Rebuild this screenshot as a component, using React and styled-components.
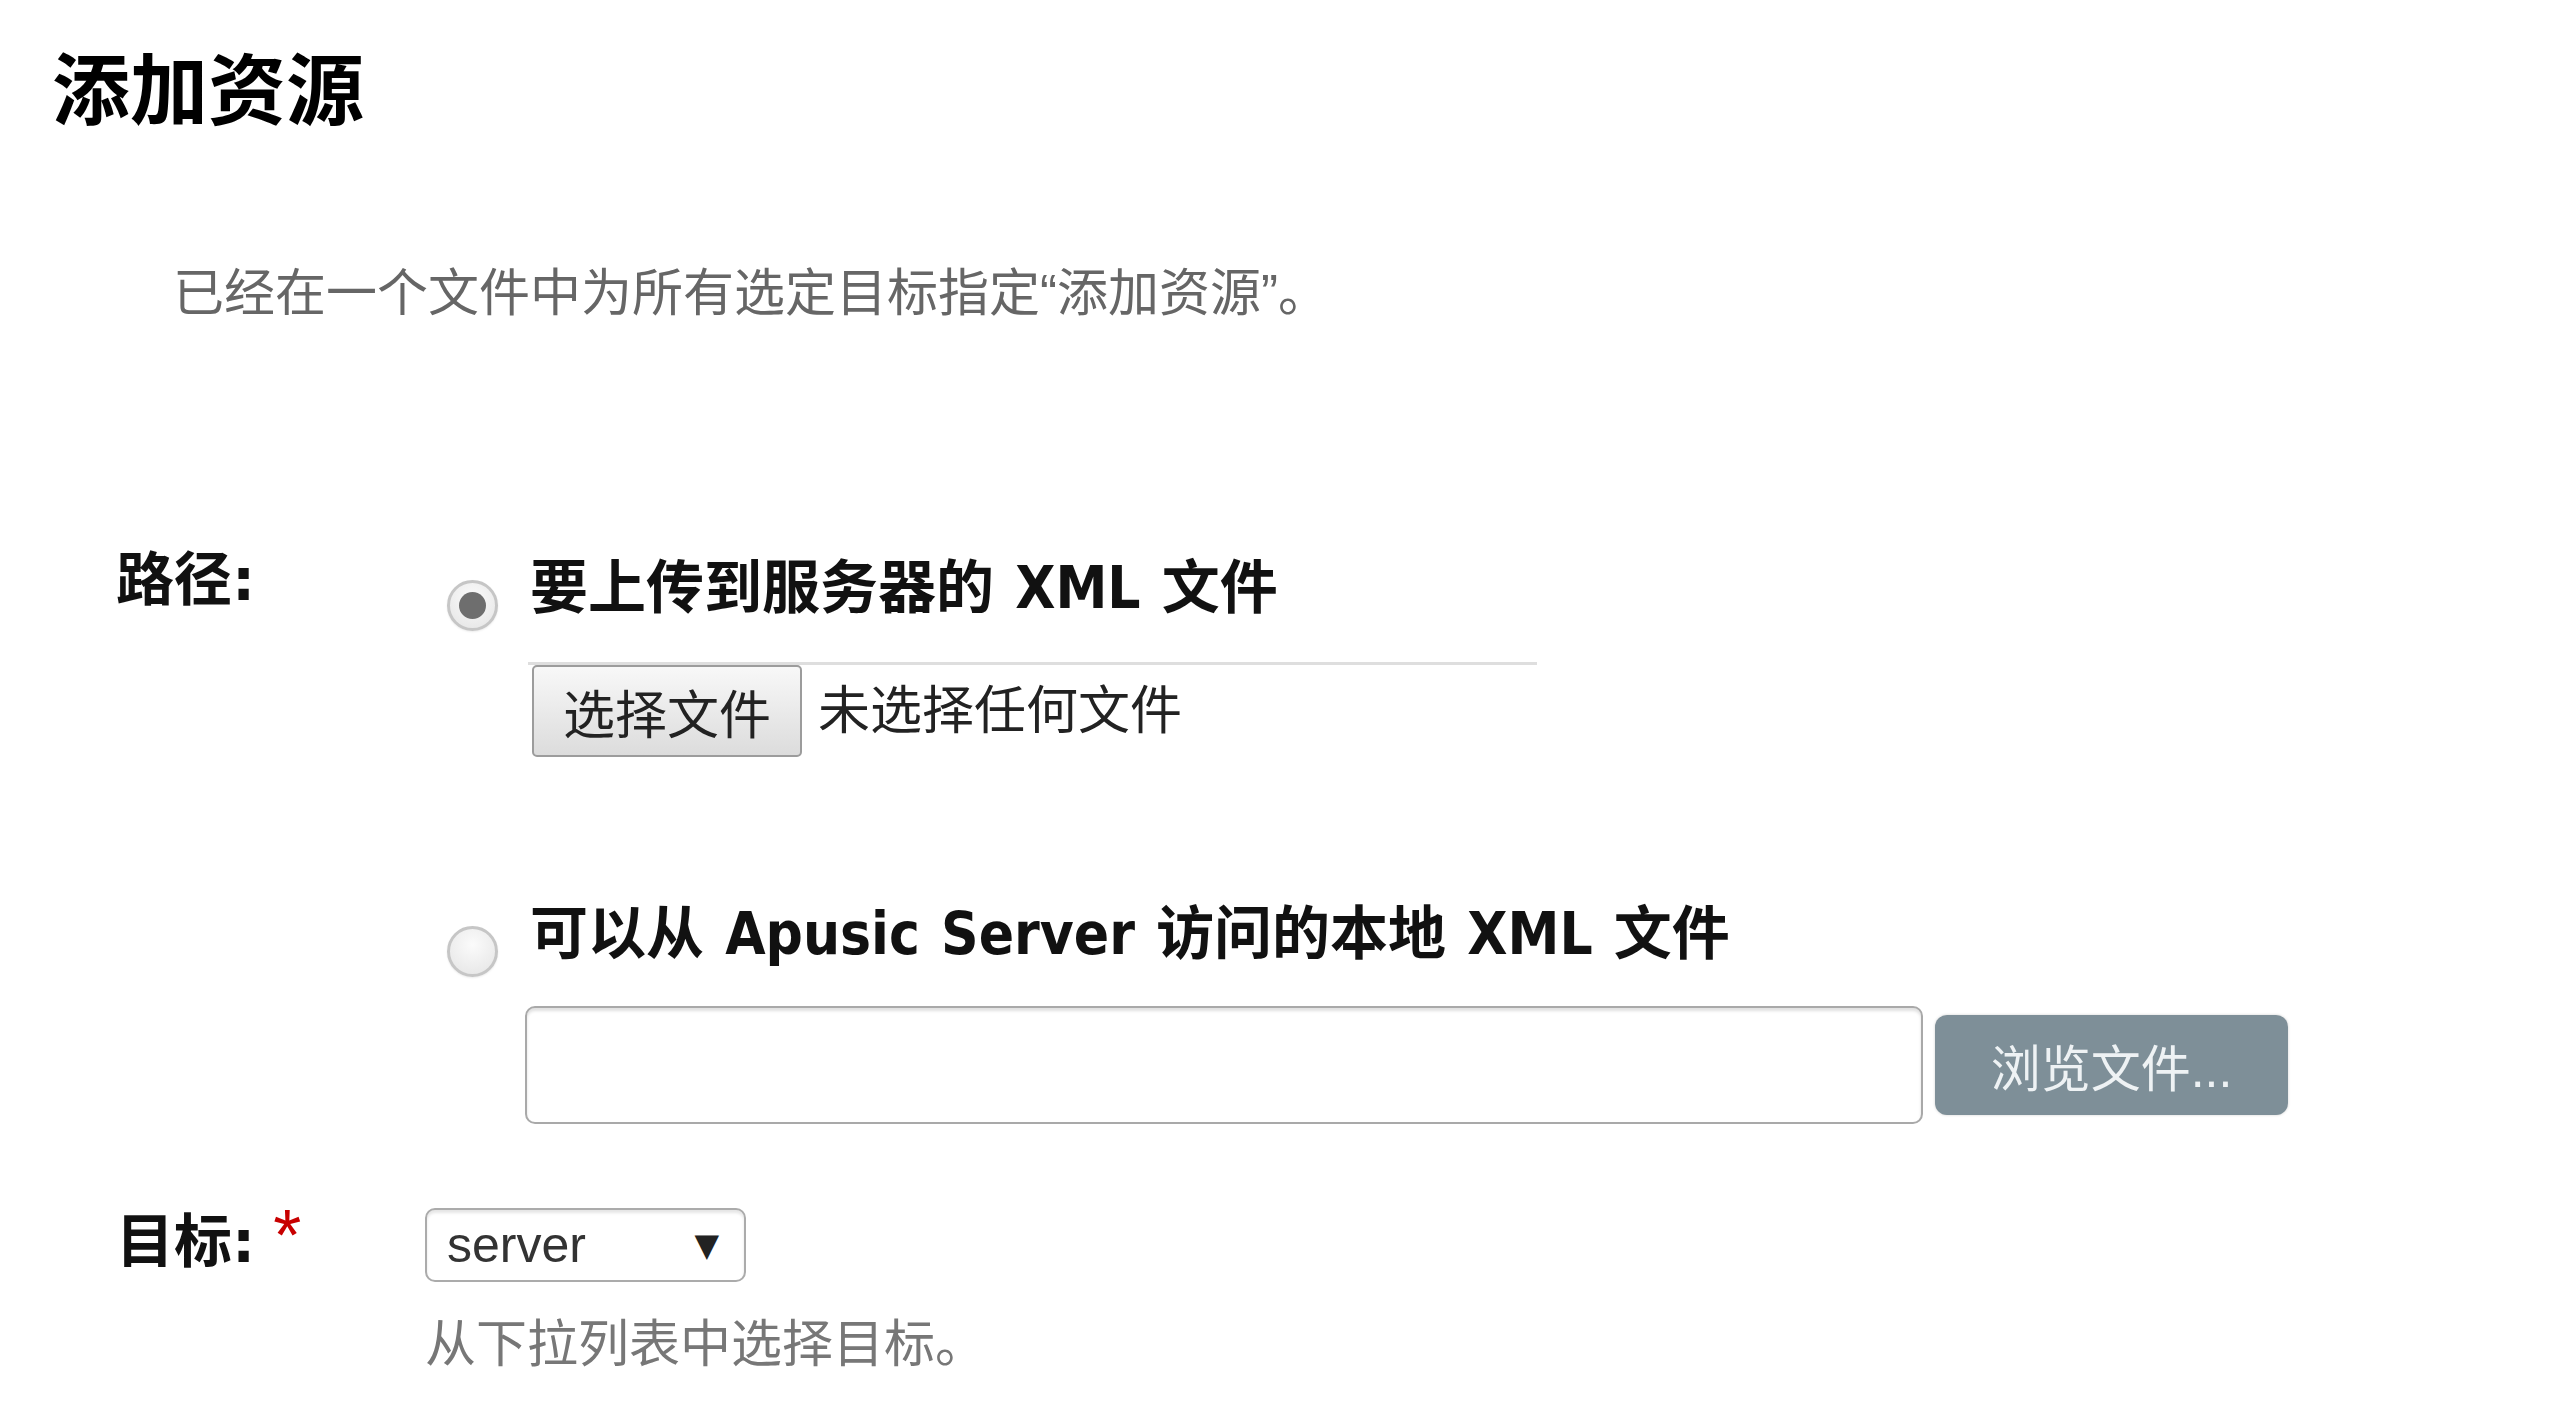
import React from "react";
import styled, { createGlobalStyle } from "styled-components";

const GlobalStyle = createGlobalStyle`
  html, body { margin: 0; padding: 0; background: #ffffff; }
  body {
    font-family: "Liberation Sans", "Noto Sans CJK SC", sans-serif;
    color: #111;
  }
`;

const Page = styled.main`
  padding: 53px 0 60px 52px;
`;

const Title = styled.h1`
  margin: 0;
  font-family: "DejaVu Sans", "Noto Sans CJK SC", sans-serif;
  font-size: 78px;
  font-weight: 700;
  line-height: 78px;
  color: #000;
`;

const Intro = styled.p`
  margin: 138px 0 0;
  padding-left: 121px;
  font-size: 51px;
  line-height: 50px;
  color: #666;
`;

const Form = styled.form`
  margin: 232px 0 0 64px;
  display: flex;
  flex-direction: column;
`;

const FieldRow = styled.div`
  display: grid;
  grid-template-columns: 309px 1fr;
  align-items: start;
  margin-top: ${(p) => p.$gap || 0}px;
`;

const FieldLabel = styled.div`
  display: flex;
  align-items: flex-start;
  padding-top: ${(p) => p.$offset || 0}px;
  font-family: "DejaVu Sans", "Noto Sans CJK SC", sans-serif;
  font-weight: 700;
  font-size: 58px;
  line-height: 58px;
  color: #111;
`;

const Required = styled.span`
  margin: -14px 0 0 18px;
  color: #c80000;
  font-family: "Liberation Sans", sans-serif;
  font-weight: 400;
  font-size: 72px;
  line-height: 72px;
`;

const Options = styled.div`
  display: flex;
  flex-direction: column;
  padding: 8px 0 0 22px;
`;

const Option = styled.div`
  display: flex;
  align-items: flex-start;
  gap: 27px;
  margin-top: ${(p) => p.$gap || 0}px;
`;

const Radio = styled.span`
  flex: none;
  box-sizing: border-box;
  width: 51px;
  height: 51px;
  margin-top: 21px;
  border-radius: 50%;
  border: 3px solid #c6c6c6;
  background: radial-gradient(circle at 50% 35%, #fbfbfb 0%, #e4e4e4 100%);
  box-shadow: 0 1px 2px rgba(0, 0, 0, 0.08);
  display: flex;
  align-items: center;
  justify-content: center;

  &::after {
    content: "";
    display: ${(p) => (p.$checked ? "block" : "none")};
    width: 27px;
    height: 27px;
    border-radius: 50%;
    background: #6e6e6e;
  }
`;

const OptionBody = styled.div`
  display: flex;
  flex-direction: column;
`;

const OptionText = styled.div`
  padding-left: 5px;
  font-family: "DejaVu Sans Condensed", "DejaVu Sans", "Noto Sans CJK SC", sans-serif;
  font-weight: 700;
  font-size: 58px;
  line-height: 58px;
  word-spacing: 3px;
  color: #111;
  white-space: nowrap;
`;

const FileField = styled.div`
  display: flex;
  align-items: center;
  width: 1009px;
  margin: 45px 0 0 3px;
  border-top: 3px solid #dedede;
`;

const FileButton = styled.button`
  box-sizing: border-box;
  width: 270px;
  height: 92px;
  margin-left: 4px;
  padding: 0;
  border: 2px solid #9c9c9c;
  border-radius: 5px;
  background: linear-gradient(#f8f8f8, #dcdcdc);
  font-family: "Liberation Sans", "Noto Sans CJK SC", sans-serif;
  font-size: 52px;
  color: #222;
`;

const FileStatus = styled.span`
  margin-left: 16px;
  font-size: 52px;
  line-height: 52px;
  color: #222;
`;

const PathRow = styled.div`
  display: flex;
  align-items: center;
  margin-top: 43px;
`;

const TextInput = styled.input`
  box-sizing: border-box;
  width: 1398px;
  height: 118px;
  padding: 0 20px;
  border: 2px solid #a9a9a9;
  border-radius: 10px;
  background: #fff;
  box-shadow: inset 0 3px 3px rgba(0, 0, 0, 0.12);
  font-family: "Liberation Sans", sans-serif;
  font-size: 50px;
  outline: none;
`;

const BrowseButton = styled.button`
  box-sizing: border-box;
  width: 353px;
  height: 100px;
  margin-left: 12px;
  padding: 0;
  border: none;
  border-radius: 12px;
  background: #7e8f98;
  box-shadow: 0 0 3px rgba(0, 0, 0, 0.18);
  font-family: "Liberation Sans", "Noto Sans CJK SC", sans-serif;
  font-size: 50px;
  color: #eef2f4;
`;

const SelectColumn = styled.div`
  display: flex;
  flex-direction: column;
  align-items: flex-start;
`;

const SelectBox = styled.div`
  box-sizing: border-box;
  width: 321px;
  height: 74px;
  display: flex;
  align-items: center;
  justify-content: space-between;
  padding: 0 25px 0 20px;
  border: 2px solid #ababab;
  border-radius: 10px;
  background: #fff;
  box-shadow: inset 0 3px 3px rgba(0, 0, 0, 0.1);
  font-family: "Liberation Sans", sans-serif;
  font-size: 50px;
  color: #333;
`;

const Caret = styled.span`
  font-family: "DejaVu Sans", sans-serif;
  font-size: 32px;
  color: #222;
`;

const Help = styled.div`
  margin-top: 38px;
  font-size: 51px;
  line-height: 50px;
  color: #777;
`;

export default function App() {
  return (
    <>
      <GlobalStyle />
      <Page>
        <Title>添加资源</Title>
        <Intro>已经在一个文件中为所有选定目标指定“添加资源”。</Intro>
        <Form onSubmit={(e) => e.preventDefault()}>
          <FieldRow>
            <FieldLabel>路径:</FieldLabel>
            <Options>
              <Option>
                <Radio $checked />
                <OptionBody>
                  <OptionText>要上传到服务器的 XML 文件</OptionText>
                  <FileField>
                    <FileButton type="button">选择文件</FileButton>
                    <FileStatus>未选择任何文件</FileStatus>
                  </FileField>
                </OptionBody>
              </Option>
              <Option $gap={148}>
                <Radio />
                <OptionBody>
                  <OptionText>可以从 Apusic Server 访问的本地 XML 文件</OptionText>
                  <PathRow>
                    <TextInput type="text" defaultValue="" />
                    <BrowseButton type="button">浏览文件...</BrowseButton>
                  </PathRow>
                </OptionBody>
              </Option>
            </Options>
          </FieldRow>
          <FieldRow $gap={84}>
            <FieldLabel $offset={5}>
              目标:<Required>*</Required>
            </FieldLabel>
            <SelectColumn>
              <SelectBox>
                <span>server</span>
                <Caret>▼</Caret>
              </SelectBox>
              <Help>从下拉列表中选择目标。</Help>
            </SelectColumn>
          </FieldRow>
        </Form>
      </Page>
    </>
  );
}
